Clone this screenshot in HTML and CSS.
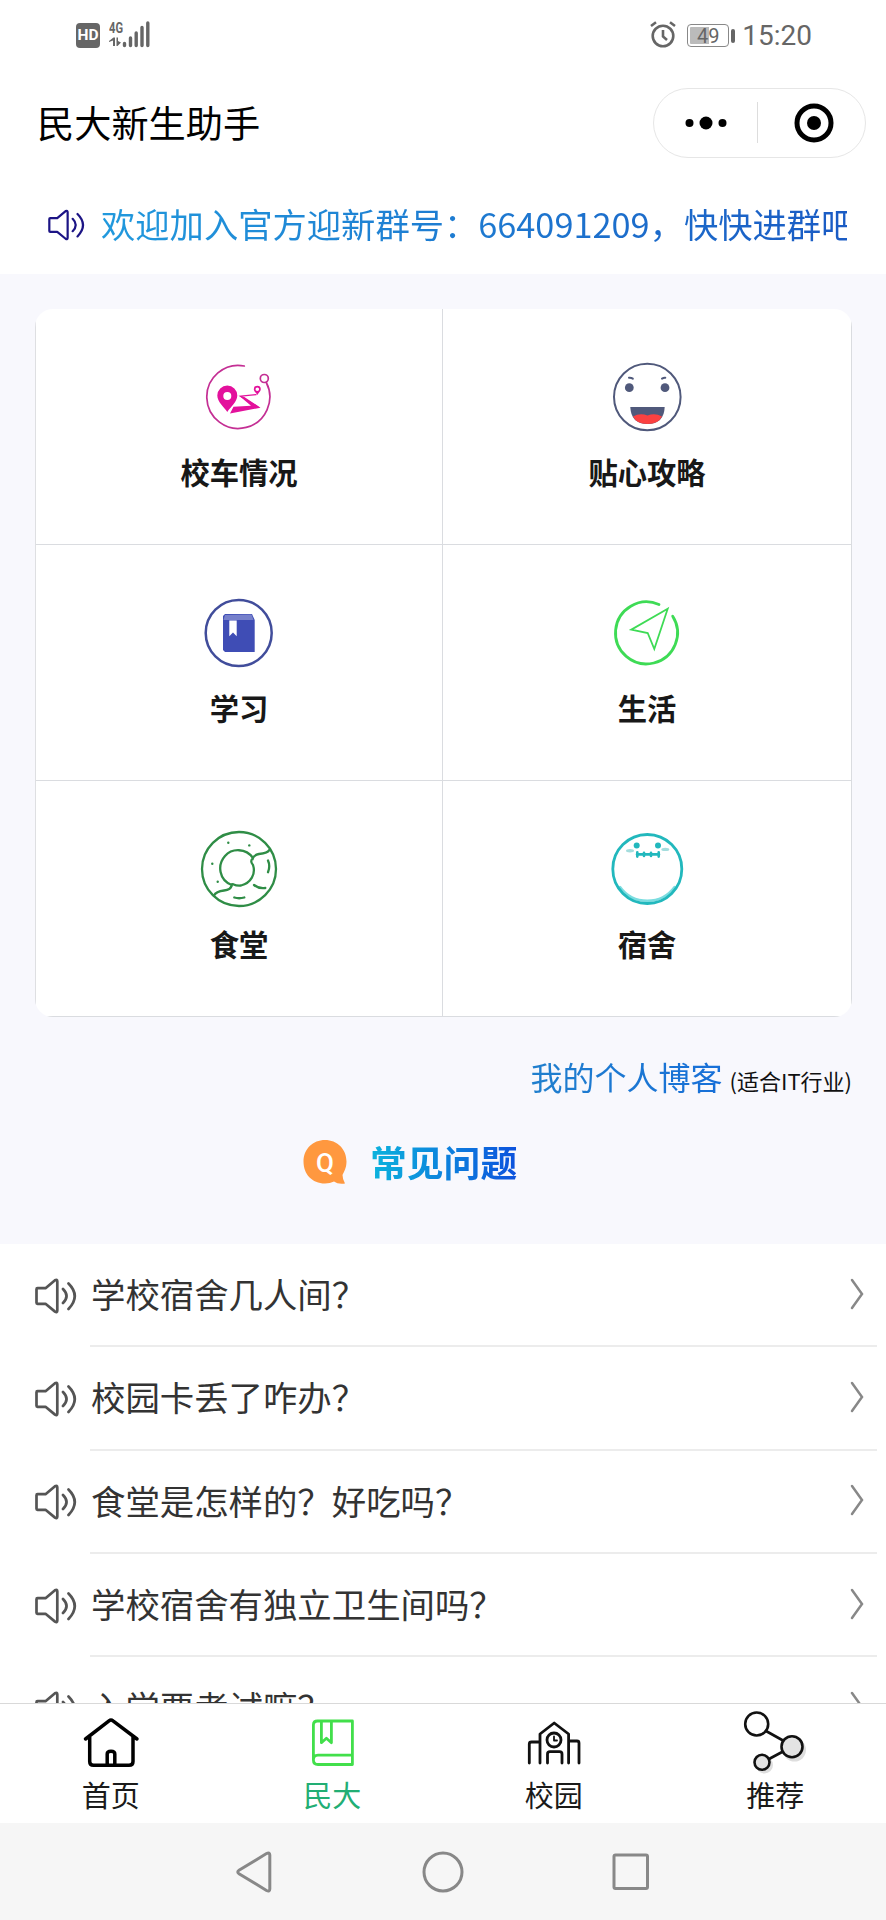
FILE: index.html
```html
<!DOCTYPE html>
<html lang="zh-CN">
<head>
<meta charset="utf-8">
<title>民大新生助手</title>
<link rel="stylesheet" href="styles.css">
</head>
<body>
<svg class="defs" aria-hidden="true">
  <symbol id="speaker" viewBox="0 0 42 36">
    <path d="M2.500 10.200H10.500L20 2.200Q22.300 1 22.300 3.500V32.500Q22.300 35 20 33.600L10.500 25.800H2.500Q1.500 25.800 1.500 24.800V11.200Q1.500 10.200 2.500 10.200Z"/>
    <path d="M28 11Q35 18 28 25M33.500 5.500Q46 18 33.500 31"/>
  </symbol>
  <symbol id="chevron" viewBox="0 0 14 32"><path d="M2 2L12 16L2 30"/></symbol>
</svg>

<header class="status">
  <div class="status-left">
    <span class="hd">HD</span>
    <svg width="42" height="28" viewBox="0 0 42 28">
      <text class="net" x="0" y="12" textLength="14" lengthAdjust="spacingAndGlyphs">4G</text>
      <path class="solid" d="M0 20L4.500 16.500H6V25H4V19.500L0 21ZM7.500 16.500H9V20L12 21.500L8.500 25H7.500Z"/>
      <path class="bars" d="M15.500 22.500V24.500M21.500 17V24.500M27.200 12V24.500M33 6.500V24.500M38.800 2V24.500"/>
    </svg>
  </div>
  <div class="status-right">
    <svg class="alarm" width="26" height="28" viewBox="0 0 26 28">
      <circle cx="13" cy="15" r="10.300"/><path d="M13 9V15.500L17 19M1 5L6 1.300M25 5L20 1.300"/>
    </svg>
    <span class="battery"><span class="battery-box">49</span><span class="battery-tip"></span></span>
    <span class="time">15:20</span>
  </div>
</header>

<div class="navbar">
  <h1 class="app-title">民大新生助手</h1>
  <div class="capsule">
    <div class="capsule-half"><svg width="42" height="14" viewBox="0 0 42 14"><circle cx="4.500" cy="7" r="4"/><circle cx="21" cy="7" r="6.500"/><circle cx="37.500" cy="7" r="4"/></svg></div>
    <div class="capsule-line"></div>
    <div class="capsule-half capsule-close"><svg width="40" height="40" viewBox="0 0 40 40"><circle class="ring" cx="20" cy="20" r="17"/><circle cx="20" cy="20" r="7"/></svg></div>
  </div>
</div>

<div class="notice">
  <svg class="notice-icon"><use href="#speaker"/></svg>
  <div class="notice-text">欢迎加入官方迎新群号：664091209，快快进群吧</div>
</div>

<main class="content">
  <div class="grid">
    <div class="cell">
      <svg class="cell-icon pink" viewBox="0 0 80 80">
        <path class="line" d="M45.300 9A31.500 31.500 0 1 0 67.300 25.500"/>
        <circle class="line" cx="65.300" cy="21.500" r="4"/>
        <path class="fill" fill-rule="evenodd" d="M28.300 55C25 50 18.300 45 18.300 38.500A10 10 0 0 1 38.300 38.500C38.300 45 31.500 50 28.300 55ZM28.300 35A4 4 0 1 0 28.300 43A4 4 0 1 0 28.300 35Z"/>
        <path class="fill" fill-rule="evenodd" d="M58.300 38C57 35.500 54.800 34.500 54.800 32.200A3.500 3.500 0 0 1 61.800 32.200C61.800 34.500 59.500 35.500 58.300 38ZM58.300 30.500A1.800 1.800 0 1 0 58.300 34.100A1.800 1.800 0 1 0 58.300 30.500Z"/>
        <path class="fill" d="M61.500 50.700L31 56.500L34.500 49.700L52 48.700L40.500 39L45 39.700Z"/>
        <path class="route" d="M57 37.700L41.500 39.200L59 50"/>
      </svg>
      <span>校车情况</span>
    </div>
    <div class="cell">
      <svg class="cell-icon slate" viewBox="0 0 80 80">
        <circle class="line" cx="40.300" cy="40" r="33.300"/>
        <circle class="fill" cx="22.300" cy="30.700" r="4.400"/><circle class="fill" cx="58" cy="30.700" r="4.400"/>
        <path class="line" d="M22 20.700Q24 20.400 25.800 21.600M58.300 20.700Q57 20.400 55 21.600"/>
        <path class="fill" d="M23.300 50H57.700Q57 67 40.500 67Q24 67 23.300 50Z"/>
        <path class="tongue" d="M26 59.500Q33 55.500 40.500 58.500Q48 55.500 55 59.500Q51.500 67 40.500 67Q29.500 67 26 59.500Z"/>
      </svg>
      <span>贴心攻略</span>
    </div>
    <div class="cell">
      <svg class="cell-icon indigo" viewBox="0 0 80 80">
        <circle class="line" cx="39.700" cy="40" r="33"/>
        <path class="fill" d="M26 21H53L55.700 27V59H26L24 57V23Z"/>
        <path class="strip" d="M26 22L52.500 21.500L54.500 27H24.500Z"/>
        <path class="mark" d="M30.300 27.500H37.700V43.300L34 39.500L30.300 43.300Z"/>
      </svg>
      <span>学习</span>
    </div>
    <div class="cell">
      <svg class="cell-icon lime" viewBox="0 0 80 80">
        <path class="thick" d="M52 11.500A31 31 0 1 0 65.700 23.300"/>
        <path class="line" d="M60.700 15.800L24.300 36.700L40.700 40L47.300 56Z"/>
      </svg>
      <span>生活</span>
    </div>
    <div class="cell">
      <svg class="cell-icon green" viewBox="0 0 80 80">
        <circle class="line" cx="40" cy="40" r="37"/>
        <path class="line" d="M70.300 21Q69 24 60 25Q55 26 54 29C47 19 33 19 26 27C18 36 20 51 32.700 56Q32 61 25 61.500Q17 62.500 15 66.500M54 29Q50.500 32 54 36C57 45 52 54 42 56.500Q38 57 34 55.200Q32.500 55 32.700 57"/>
        <path class="line" d="M69 31.500Q71.500 37 69 43.200M55 56Q60 60 66.300 59M35.300 68.500Q40 70 45.300 68.500"/>
        <g class="fill"><circle cx="29.300" cy="13.700" r="1.200"/><circle cx="50.300" cy="16.400" r="1.200"/><circle cx="13.300" cy="34.700" r="1.200"/><circle cx="18.700" cy="52.700" r="1.200"/></g>
      </svg>
      <span>食堂</span>
    </div>
    <div class="cell">
      <svg class="cell-icon teal" viewBox="0 0 80 80">
        <path class="pale" d="M13 58Q23 71.800 40.300 71.800Q57.500 71.800 67.600 58"/>
        <circle class="line" cx="40.300" cy="40" r="34.500"/>
        <circle class="fill" cx="29.700" cy="16.400" r="3"/><circle class="fill" cx="51" cy="16.400" r="3"/>
        <ellipse class="cheek" cx="23" cy="21.700" rx="4" ry="1.700"/><ellipse class="cheek" cx="58.300" cy="20.400" rx="4" ry="1.700"/>
        <path class="mouth" d="M30 25.400H52M30.300 23.200V27.600M37 23.800V27M44 23.800V27M51.700 23.200V27.600"/>
      </svg>
      <span>宿舍</span>
    </div>
  </div>

  <div class="blog"><span class="blog-link">我的个人博客</span><span class="blog-note">(适合IT行业)</span></div>

  <div class="faq-head">
    <svg width="44" height="46" viewBox="0 0 44 46">
      <path class="bubble" d="M22 1C34 1 43.500 10 43.500 22.500C43.500 29 41 33 39.500 36Q39.500 40 42 44.500Q35 45.500 31 42.500Q27 44.500 22 44.500C9 44.500 .5 35 .5 22.500C.5 10 10 1 22 1Z"/>
      <text class="bubble-q" x="22" y="33" text-anchor="middle">Q</text>
    </svg>
    <h2>常见问题</h2>
  </div>
</main>

<div class="faq">
  <div class="faq-row"><svg class="faq-icon"><use href="#speaker"/></svg><div class="faq-body"><span>学校宿舍几人间？</span><svg class="chev"><use href="#chevron"/></svg></div></div>
  <div class="faq-row"><svg class="faq-icon"><use href="#speaker"/></svg><div class="faq-body"><span>校园卡丢了咋办？</span><svg class="chev"><use href="#chevron"/></svg></div></div>
  <div class="faq-row"><svg class="faq-icon"><use href="#speaker"/></svg><div class="faq-body"><span>食堂是怎样的？好吃吗？</span><svg class="chev"><use href="#chevron"/></svg></div></div>
  <div class="faq-row"><svg class="faq-icon"><use href="#speaker"/></svg><div class="faq-body"><span>学校宿舍有独立卫生间吗？</span><svg class="chev"><use href="#chevron"/></svg></div></div>
  <div class="faq-row"><svg class="faq-icon"><use href="#speaker"/></svg><div class="faq-body"><span>入学要考试嘛？</span><svg class="chev"><use href="#chevron"/></svg></div></div>
</div>

<nav class="tabbar">
  <div class="tab">
    <svg class="tab-icon home" viewBox="0 0 72 64"><path d="M10.500 29L34 10.800Q36 9.200 38 10.800L62 29M14.700 27V51.500Q14.700 55.300 18.500 55.300H54Q58 55.300 58 51.500V27M32.200 55V44Q32.200 41.200 36 41.200Q39.800 41.200 39.800 44V55"/></svg>
    <span>首页</span>
  </div>
  <div class="tab active">
    <svg class="tab-icon" viewBox="0 0 72 64"><path d="M17.400 50V15Q17.400 11 21.500 11H56.400V54.500H22Q17.400 54.500 17.400 50Q17.400 45.200 22 45.200H56M25.400 11V32.700L30.400 28.300L35.400 32.700V11"/></svg>
    <span>民大</span>
  </div>
  <div class="tab">
    <svg class="tab-icon" viewBox="0 0 72 64"><path d="M11.300 53V34Q11.300 32 13.500 32H22M22 53V24L36.200 13L50.600 24V53M50.600 31H59Q61 31 61 33V53M29.500 53V44Q29.500 41.700 32 41.700H41.500Q44 41.700 44 44V53"/><circle cx="36" cy="30" r="7"/><path class="hands" d="M36 26.500V30.500H39"/></svg>
    <span>校园</span>
  </div>
  <div class="tab">
    <svg class="tab-icon share" viewBox="0 0 72 64"><g class="shade"><circle cx="55.500" cy="40" r="11.500"/><circle cx="25.500" cy="55" r="8.500"/></g><path d="M27 21L44 30.500M30 49L44 41.500"/><circle cx="17.700" cy="14" r="11.500"/><circle class="node" cx="53" cy="36.700" r="10.500"/><circle class="node" cx="23" cy="52.300" r="7.500"/></svg>
    <span>推荐</span>
  </div>
</nav>

<footer class="sysnav">
  <svg viewBox="0 0 44 44"><path d="M6 20.300Q3.500 22 6 23.700L33.500 40.500Q36.800 42 36.800 39V5Q36.800 2 33.500 3.500Z"/></svg>
  <svg viewBox="0 0 44 44"><circle cx="22" cy="22" r="19"/></svg>
  <svg viewBox="0 0 44 44"><rect x="5" y="5" width="33.500" height="33.500" rx="1.500"/></svg>
</footer>
</body>
</html>
```

FILE: styles.css
```css
* { box-sizing: border-box; }
html, body { margin: 0; padding: 0; }
body {
  width: 886px;
  height: 1920px;
  overflow: hidden;
  display: flex;
  flex-direction: column;
  background: #fff;
  font-family: "Noto Sans CJK SC", "Noto Sans", sans-serif;
  color: #000;
}
svg { display: block; flex: none; }
h1, h2 { margin: 0; font-weight: 400; }
.defs { width: 0; height: 0; position: absolute; }

/* status bar */
.status {
  height: 70px;
  flex: none;
  display: flex;
  justify-content: space-between;
  padding: 0 74px 0 76px;
  font-family: Roboto, sans-serif;
  color: #666;
}
.status-left, .status-right { display: flex; align-items: center; height: 71px; }
.hd {
  width: 24px;
  height: 25px;
  margin-right: 9px;
  border-radius: 4px;
  background: #666;
  color: #fff;
  font-size: 15.500px;
  font-weight: 700;
  line-height: 25px;
  text-align: center;
}
.net { font: 700 14.500px Roboto, sans-serif; fill: #666; }
.solid { fill: #666; }
.bars { stroke: #666; stroke-width: 3.400; stroke-linecap: round; fill: none; }
.status-left svg { margin-top: -2px; }
.alarm { fill: none; stroke: #666; stroke-width: 2.600; margin-right: 11px; margin-top: -1px; }
.battery { display: flex; align-items: center; gap: 2px; margin-right: 7px; }
.battery-box {
  width: 42px;
  height: 23px;
  border: 1.500px solid #888;
  border-radius: 4px;
  background: linear-gradient(90deg, #bbb 19px, #fff 19px) content-box;
  padding: 2px;
  font-size: 20px;
  line-height: 18px;
  text-align: center;
}
.battery-tip { width: 4px; height: 14px; border-radius: 2px; background: #666; }
.time { font-size: 28px; line-height: 28px; }

/* title bar */
.navbar {
  height: 105px;
  flex: none;
  display: flex;
  align-items: center;
  justify-content: space-between;
  padding: 0 20px 0 37px;
}
.app-title { font-size: 37.200px; line-height: 56px; margin-top: -1px; padding-bottom: 1px; }
.capsule {
  width: 213px;
  height: 70px;
  border: 1px solid #e6e6e6;
  border-radius: 35px;
  display: flex;
  align-items: center;
}
.capsule-half { flex: 1; display: flex; justify-content: center; }
.capsule-close { padding-left: 4px; }
.capsule-line { width: 1px; height: 41px; background: #ddd; }
.ring { fill: none; stroke: #000; stroke-width: 5; }

/* scrolling notice */
.notice {
  height: 99px;
  flex: none;
  display: flex;
  align-items: center;
  padding: 0 39px 0 48px;
}
.notice-icon { width: 37px; height: 32px; margin-right: 16px; fill: none; stroke: #1c1485; stroke-width: 2.500; stroke-linejoin: round; stroke-linecap: round; }
.notice-text {
  flex: 1;
  overflow: hidden;
  white-space: nowrap;
  font-size: 34.300px;
  line-height: 52px;
  margin-bottom: 3px;
  background: linear-gradient(90deg, #2199dd, #1a5bc4);
  background-clip: text;
  -webkit-background-clip: text;
  color: transparent;
}

/* main area */
.content { height: 970px; flex: none; padding: 35px 34px 0 35px; background: #f8f8fd; }
.grid {
  display: grid;
  grid-template-columns: 407px 409px;
  grid-auto-rows: 236px;
  width: 817px;
  padding-left: 1px;
  border-radius: 18px;
  overflow: hidden;
  background: linear-gradient(90deg, #dedfe2 1px, #fff 1px);
}
.cell {
  border-right: 1px solid #dadce0;
  border-bottom: 1px solid #dadce0;
  padding-top: 48px;
  display: flex;
  flex-direction: column;
  align-items: center;
  gap: 12px;
  font-size: 29.300px;
  font-weight: 700;
  line-height: 44px;
  color: #181818;
}
.cell-icon { width: 80px; height: 80px; fill: none; stroke-linecap: round; }
.cell-icon .line { stroke: var(--c); stroke-width: 2; }
.cell-icon .fill { fill: var(--c); }
.pink { --c: #e3119c; }
.pink .line { stroke: #c42f94; stroke-width: 1.700; }
.route { stroke: var(--c); stroke-width: 1.300; }
.slate { --c: #50597b; }
.tongue { fill: #fb4141; }
.indigo { --c: #3f4db5; }
.indigo .line { stroke: #414d9b; stroke-width: 2.500; }
.strip { fill: #7680cb; }
.mark { fill: #fff; }
.lime { --c: #3edb55; }
.lime .line { stroke-width: 1.800; }
.thick { stroke: var(--c); stroke-width: 2.800; }
.green { --c: #2f8d46; }
.green .line { stroke-width: 2.300; }
.teal { --c: #22b8bd; }
.teal .line { stroke-width: 2.800; }
.pale { stroke: #7bdde0; stroke-width: 2.500; }
.cheek { fill: #a4dddd; }
.mouth { stroke: var(--c); stroke-width: 2.600; }

.blog { display: flex; justify-content: flex-end; align-items: baseline; margin-top: 35px; line-height: 48px; }
.blog-link {
  font-size: 32px;
  margin-right: 7px;
  background: linear-gradient(90deg, #207fcd, #176fd8);
  background-clip: text;
  -webkit-background-clip: text;
  color: transparent;
}
.blog-note { font-size: 22px; color: #111; }
.faq-head { display: flex; align-items: center; gap: 23px; margin: 31px 0 0 268px; height: 54px; }
.bubble { fill: #ff983f; }
.bubble-q { font: 500 26px Roboto, sans-serif; fill: #fff; }
.faq-head h2 {
  font-size: 36.800px;
  font-weight: 700;
  line-height: 54px;
  margin-bottom: 3px;
  background: linear-gradient(90deg, #0cb4dd, #0d52dd);
  background-clip: text;
  -webkit-background-clip: text;
  color: transparent;
}

/* question list */
.faq { flex: 1; min-height: 0; overflow: hidden; }
.faq-row { height: 103.300px; display: flex; align-items: center; padding: 0 9px 0 35px; }
.faq-icon { width: 42px; height: 36px; fill: none; stroke: #555; stroke-width: 2.700; stroke-linejoin: round; stroke-linecap: round; }
.faq-body {
  flex: 1;
  height: 100%;
  margin-left: 13px;
  padding: 0 13px 0 1px;
  border-bottom: 2px solid #ececec;
  display: flex;
  align-items: center;
  justify-content: space-between;
  font-size: 34.400px;
  line-height: 52px;
  color: #333;
}
.faq-body span { margin-bottom: 3px; }
.chev { width: 14px; height: 32px; margin-top: -2px; fill: none; stroke: #888; stroke-width: 2.500; stroke-linecap: round; }

/* tabs */
.tabbar { height: 120px; flex: none; display: flex; border-top: 1px solid #d9d9d9; background: #fff; }
.tab { flex: 1; display: flex; flex-direction: column; align-items: center; padding-top: 6px; font-size: 29px; line-height: 40px; color: #1a1a1a; }
.tab.active { color: #22ae74; }
.tab-icon { width: 72px; height: 64px; fill: none; stroke: #111; stroke-width: 2.800; stroke-linecap: round; stroke-linejoin: round; }
.home { stroke: #000; stroke-width: 3.500; }
.hands { stroke-width: 1.800; }
.active .tab-icon { stroke: #42df4b; }
.share { overflow: visible; stroke-width: 2.600; }
.node { fill: #e3e3e3; }
.shade { fill: #dedede; stroke: none; }

/* system navigation */
.sysnav { height: 97px; flex: none; background: #f6f6f6; display: flex; align-items: center; justify-content: center; gap: 144px; }
.sysnav svg { width: 44px; height: 44px; fill: none; stroke: #888; stroke-width: 3; }
```
